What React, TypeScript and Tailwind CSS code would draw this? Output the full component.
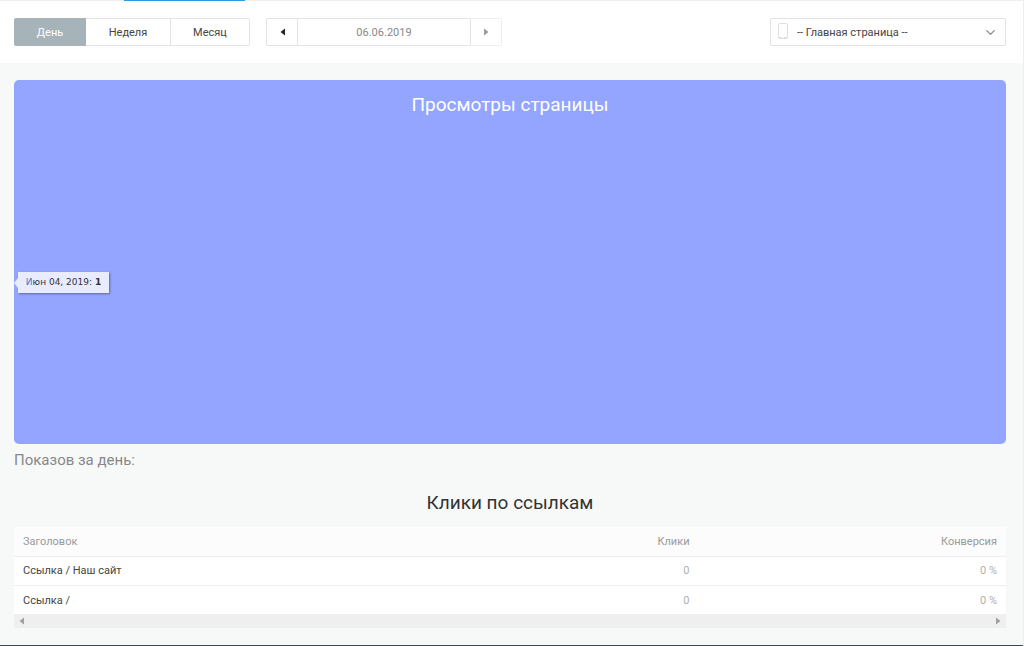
import { useState } from 'react';
import { ChevronDown } from 'lucide-react';

const periods = [
  { id: 'day', label: 'День', className: 'w-[72px] rounded-l-xs' },
  { id: 'week', label: 'Неделя', className: 'w-[85px] border-y border-r' },
  { id: 'month', label: 'Месяц', className: 'w-[79px] border-y border-r rounded-r-xs' },
];

const links = [
  { title: 'Ссылка / Наш сайт', clicks: 0, conversion: '0 %' },
  { title: 'Ссылка /', clicks: 0, conversion: '0 %' },
];

function Arrow({ direction }: { direction: 'left' | 'right' }) {
  return (
    <svg width="5" height="8" viewBox="0 0 5 8" fill="currentColor" aria-hidden="true">
      {direction === 'left' ? <path d="M5 0.5V7.5L0.5 4Z" /> : <path d="M0 0.5V7.5L4.5 4Z" />}
    </svg>
  );
}

function Toolbar() {
  const [period, setPeriod] = useState('day');

  return (
    <header className="bg-white pt-[17px] pb-[17px] pl-[14px] pr-[17px] flex items-center text-[11px]">
      {/* Период */}
      <div className="flex h-7">
        {periods.map((item) => (
          <button
            key={item.id}
            onClick={() => setPeriod(item.id)}
            className={`${item.className} pt-0.5 border-[#e3e5e5] ${period === item.id ? 'bg-[#a6b3b9] text-white' : 'bg-white text-[#444444]'}`}
          >
            {item.label}
          </button>
        ))}
      </div>

      {/* Дата */}
      <div className="flex h-7 ml-4">
        <button aria-label="Назад" className="w-8 flex items-center justify-center border border-[#e3e5e5] rounded-l-xs text-[#222222]">
          <Arrow direction="left" />
        </button>
        <input
          type="text"
          aria-label="Дата"
          readOnly
          value="06.06.2019"
          className="w-[172px] pt-0.5 border-y border-[#e3e5e5] text-center text-[#888888] outline-none"
        />
        <button aria-label="Вперёд" className="w-8 flex items-center justify-center border border-[#eeeeee] border-l-[#e3e5e5] rounded-r-xs text-[#999999]">
          <Arrow direction="right" />
        </button>
      </div>

      {/* Выбор страницы */}
      <div className="relative ml-auto w-[236px] h-7">
        <select
          aria-label="Страница"
          className="w-full h-full pt-0.5 appearance-none border border-[#e3e5e5] rounded-xs bg-white pl-[26px] pr-7 text-[#444444] outline-none"
        >
          <option>-- Главная страница --</option>
        </select>
        <svg className="absolute left-2 top-1 pointer-events-none" width="11" height="18" viewBox="0 0 11 18" fill="none" aria-hidden="true">
          <rect x="0.5" y="1.5" width="9" height="15" rx="1.5" stroke="#e2dfda" />
          <path d="M1 15.5H9" stroke="#e2dfda" />
          <path d="M4 15.5H6" stroke="#ffffff" />
        </svg>
        <ChevronDown size={15} strokeWidth={2} className="absolute right-2 top-[7px] pointer-events-none text-[#888888]" />
      </div>
    </header>
  );
}

function ViewsChart() {
  return (
    <section className="relative h-[364px] rounded-[5px] bg-[#93a5ff] pt-3">
      <h2 className="text-center text-[19px] leading-[26px] text-white">Просмотры страницы</h2>
      {/* Подсказка к точке графика */}
      <div className="absolute left-1 top-48 h-[21px] w-[91px] flex items-center justify-center bg-[#e9ebff] shadow-[1px_1px_2px_#5d68a8] font-['DejaVu_Sans',sans-serif] text-[9px] text-[#333333] whitespace-pre">
        <svg className="absolute -left-1 top-1.5" width="4" height="10" viewBox="0 0 4 10" fill="#e9ebff" aria-hidden="true">
          <path d="M4 0V10L0 5Z" />
        </svg>
        <span className="text-[#3b7fc4]">И</span>юн 04, 2019: <b>1</b>
      </div>
    </section>
  );
}

function LinksTable() {
  return (
    <div>
      <table className="w-full table-fixed text-[11px]">
        <thead>
          <tr className="h-[29px] bg-[#fcfcfc] text-[#999999]">
            <th className="px-[9px] pt-0.5 text-left font-normal">Заголовок</th>
            <th className="w-[16%] px-[9px] pt-0.5 text-right font-normal">Клики</th>
            <th className="w-[31%] px-[9px] pt-0.5 text-right font-normal">Конверсия</th>
          </tr>
        </thead>
        <tbody>
          {links.map((link) => (
            <tr key={link.title} className="h-[29px] border-t border-[#eeeeee] bg-white text-[#b0b0b0]">
              <td className="px-[9px] pt-0.5 text-[#444444]">{link.title}</td>
              <td className="px-[9px] pt-0.5 text-right">{link.clicks}</td>
              <td className="px-[9px] pt-0.5 text-right">{link.conversion}</td>
            </tr>
          ))}
        </tbody>
      </table>
      {/* Горизонтальная прокрутка */}
      <div className="flex h-[14px] items-center justify-between bg-[#efefef] px-[5px] text-[#a0a0a0]">
        <Arrow direction="left" />
        <Arrow direction="right" />
      </div>
    </div>
  );
}

export default function App() {
  return (
    <div className="min-h-screen flex flex-col border-r border-[#eeeeee] bg-[#f7f9f9] font-[Roboto,sans-serif]">
      <div className="h-px bg-[#eeeeee]">
        <div className="ml-[124px] h-px w-[121px] bg-[#2e9be6]" />
      </div>
      <Toolbar />
      <main className="flex-1 pt-[17px] pb-4 pl-[14px] pr-[17px]">
        <ViewsChart />
        <p className="pt-1 text-[15px] leading-6 text-[#888888]">Показов за день:</p>
        <h2 className="pt-[18px] pb-[11px] text-center text-[19px] leading-[26px] text-[#333333]">Клики по ссылкам</h2>
        <LinksTable />
      </main>
      <div className="h-px bg-[#3f4750]" />
    </div>
  );
}
